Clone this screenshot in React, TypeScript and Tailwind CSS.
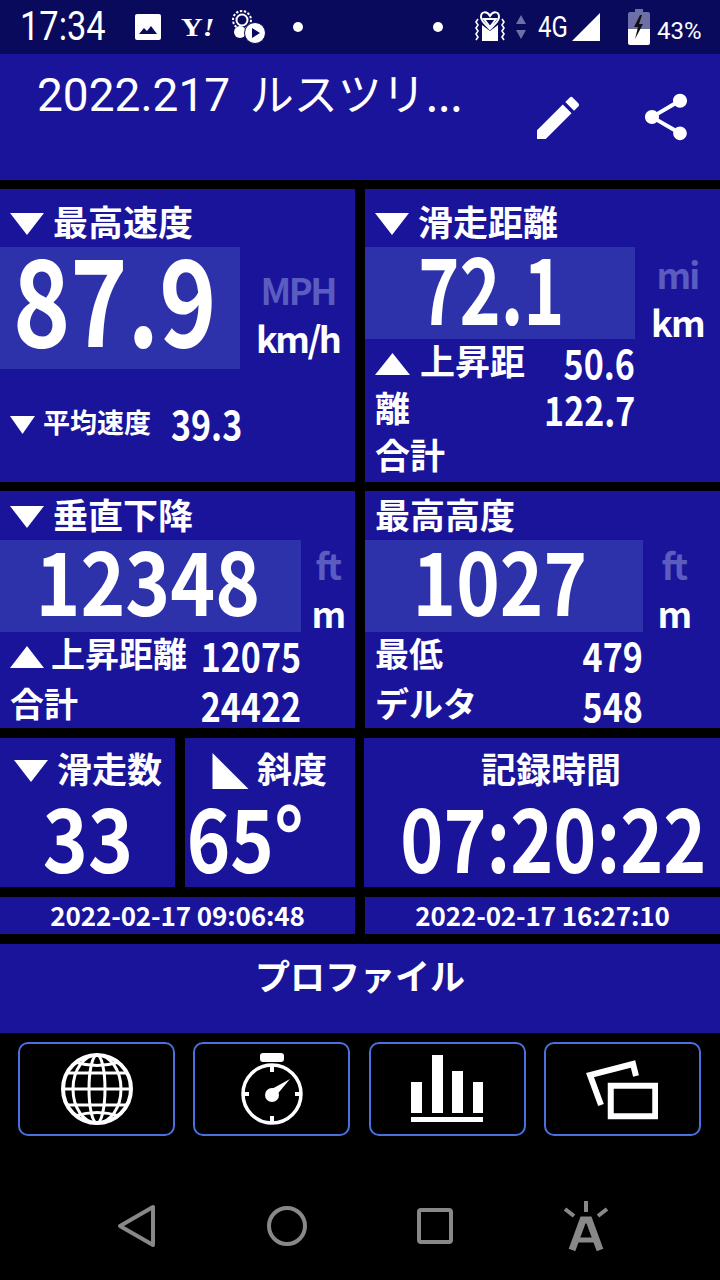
import React from "react";

function Down({ className = "w-[34px] h-[22px]" }: { className?: string }) {
  return (
    <svg viewBox="0 0 32 20" preserveAspectRatio="none" className={`${className} shrink-0 fill-white`}>
      <path d="M0 0h32L16 20z" />
    </svg>
  );
}

function Up({ className = "w-[34px] h-[22px]" }: { className?: string }) {
  return (
    <svg viewBox="0 0 32 20" preserveAspectRatio="none" className={`${className} shrink-0 fill-white`}>
      <path d="M0 20h32L16 0z" />
    </svg>
  );
}

// the digits in the picture are narrower than Noto's, so squeeze them a bit
function Num({ children, className = "" }: { children: React.ReactNode; className?: string }) {
  return <span className={`inline-block shrink-0 font-bold leading-none whitespace-nowrap ${className}`}>{children}</span>;
}

function StatusBar() {
  return (
    <div className="h-[54px] bg-[#0a0a5c] flex items-center relative text-white font-['Roboto',sans-serif]">
      <span className="ml-[20px] text-[40px] leading-none scale-x-[0.86] origin-left w-[90px] whitespace-nowrap">17:34</span>
      <svg viewBox="0 0 26 26" className="w-[26px] h-[26px] ml-[25px] fill-white">
        <path fillRule="evenodd" d="M2 0h22a2 2 0 0 1 2 2v22a2 2 0 0 1-2 2H2a2 2 0 0 1-2-2V2a2 2 0 0 1 2-2zM4 20h18l-6-8-4 5-3-3z" />
      </svg>
      <span className="ml-[20px] w-[34px] font-['Liberation_Serif',serif] font-bold text-[25px] leading-none whitespace-nowrap scale-x-[1.2] origin-left">
        Y<span className="italic">!</span>
      </span>
      <svg viewBox="0 0 34 34" className="w-[34px] h-[34px] ml-[17px] fill-white">
        <circle cx="10" cy="10" r="5.5" fill="none" stroke="#fff" strokeWidth="2" />
        <circle cx="10" cy="10" r="9" fill="none" stroke="#fff" strokeWidth="2" strokeDasharray="2.4 1.6" />
        <circle cx="8" cy="22" r="6" />
        <circle cx="23" cy="23" r="10.5" stroke="#0a0a5c" strokeWidth="1" />
        <path d="M20 18l8 5-8 5z" fill="#0a0a5c" />
      </svg>
      <span className="ml-[27px] w-[10px] h-[10px] rounded-full bg-white" />
      <span className="ml-[130px] w-[10px] h-[10px] rounded-full bg-white" />
      <svg viewBox="0 0 30 32" className="w-[30px] h-[32px] ml-[32px]" fill="none" stroke="#fff" strokeWidth="2">
        <path d="M15 5C12 0 6 0 6 6c0 4 5 8 9 12 4-4 9-8 9-12 0-6-6-6-9-1z" />
        <path d="M9 8h12l-6 8z" />
        <path d="M7 14v16h16V14l-8 6z" fill="#fff" stroke="none" />
        <path d="M3 8l-2 3 2 3-2 3 2 3-2 3 2 3-2 3M27 8l2 3-2 3 2 3-2 3 2 3-2 3 2 3" strokeWidth="1.6" />
      </svg>
      <svg viewBox="0 0 10 24" className="w-[10px] h-[24px] ml-[11px] fill-[#6f6fa8]">
        <path d="M5 0l5 9H0zM5 24L0 15h10z" />
      </svg>
      <span className="ml-[12px] text-[30px] leading-none scale-x-[0.8] origin-left w-[30px] whitespace-nowrap">4G</span>
      <svg viewBox="0 0 28 28" className="w-[28px] h-[28px] ml-[4px] fill-white">
        <path d="M28 0v28H0z" />
      </svg>
      <svg viewBox="0 0 22 36" className="w-[22px] h-[36px] ml-[28px]">
        <path d="M7 0h8v3h5a2 2 0 0 1 2 2v15H0V5a2 2 0 0 1 2-2h5z" fill="#6f6fa8" />
        <path d="M0 20h22v14a2 2 0 0 1-2 2H2a2 2 0 0 1-2-2z" fill="#fff" />
        <path d="M12 6l-6 12h4l-3 12 8-15h-4l3-9z" fill="#111" />
      </svg>
      <span className="ml-[7px] text-[24px] leading-none mt-[8px]">43%</span>
    </div>
  );
}

function AppBar() {
  return (
    <div className="h-[126px] bg-[#1a149b] flex items-start relative text-white">
      <div className="ml-[37px] mt-[11px] text-[44px] leading-[54px] w-[480px] whitespace-pre font-normal">
        <span className="font-['Roboto',sans-serif] text-[46px]">2022.217</span>  ルスツリ...
      </div>
      <svg viewBox="0 0 24 24" className="w-[56px] h-[56px] absolute left-[530px] top-[36px] fill-white">
        <path d="M3 17.25V21h3.75L17.81 9.94l-3.75-3.75L3 17.25zM20.71 7.04a1 1 0 0 0 0-1.41l-2.34-2.34a1 1 0 0 0-1.41 0l-1.83 1.83 3.75 3.75 1.83-1.83z" />
      </svg>
      <svg viewBox="0 0 24 24" className="w-[56px] h-[56px] absolute left-[638px] top-[35px] fill-white">
        <path d="M18 16.08c-.76 0-1.44.3-1.96.77L8.91 12.7c.05-.23.09-.46.09-.7s-.04-.47-.09-.7l7.05-4.11c.54.5 1.25.81 2.04.81 1.66 0 3-1.34 3-3s-1.34-3-3-3-3 1.34-3 3c0 .24.04.47.09.7L8.04 9.81C7.5 9.31 6.79 9 6 9c-1.66 0-3 1.34-3 3s1.34 3 3 3c.79 0 1.5-.31 2.04-.81l7.12 4.16c-.05.21-.08.43-.08.65 0 1.61 1.31 2.92 2.92 2.92s2.92-1.31 2.92-2.92-1.31-2.92-2.92-2.92z" />
      </svg>
    </div>
  );
}

function Label({ children, className = "" }: { children: React.ReactNode; className?: string }) {
  return <span className={`font-bold leading-none whitespace-nowrap mb-[8px] ${className}`}>{children}</span>;
}

function Units({ dim, on, className = "" }: { dim: string; on: string; className?: string }) {
  return (
    <div className={`flex flex-col items-center font-bold h-[92px] ${className}`}>
      <span className="text-[#5a5cc0] leading-none">{dim}</span>
      <span className="text-white leading-none mt-[12px]">{on}</span>
    </div>
  );
}

function StatRow({ label, value, up }: { label: string; value: string; up?: boolean }) {
  return (
    <div className="flex items-center h-[50px]">
      {up && <Up className="w-[34px] h-[22px] mr-[7px]" />}
      <Label className="text-[34px] flex-1 min-w-0">{label}</Label>
      <Num className="text-[40px] origin-right scale-x-[0.85] mb-[4px]">{value}</Num>
    </div>
  );
}

function SpeedCard() {
  return (
    <div className="bg-[#1a149b] h-[293px] w-[355px] pt-[15px]">
      <div className="flex items-center gap-[9px] pl-[10px] h-[40px]">
        <Down />
        <Label className="text-[35px]">最高速度</Label>
      </div>
      <div className="flex mt-[3px] h-[122px]">
        <div className="w-[240px] h-[122px] bg-[#2d32aa] flex items-center justify-center pr-[10px] pb-[26px]">
          <Num className="text-[120px] scale-x-[0.81]">87.9</Num>
        </div>
        <Units dim="MPH" on="km/h" className="text-[36px] ml-[16px] pt-[24px] tracking-[-0.07em]" />
      </div>
      <div className="flex items-center mt-[36px] pl-[10px] h-[40px]">
        <Down className="w-[25px] h-[18px]" />
        <Label className="text-[27px] ml-[8px]">平均速度</Label>
        <Num className="text-[40px] ml-[20px] mb-[4px] origin-left scale-x-[0.85]">39.3</Num>
      </div>
    </div>
  );
}

function DistanceCard() {
  return (
    <div className="bg-[#1a149b] h-[293px] w-[355px] pt-[15px]">
      <div className="flex items-center gap-[9px] pl-[10px] h-[40px]">
        <Down />
        <Label className="text-[35px]">滑走距離</Label>
      </div>
      <div className="flex mt-[3px]">
        <div className="w-[270px] h-[92px] bg-[#2d32aa] flex items-center justify-center pr-[18px] pb-[16px]">
          <Num className="text-[92px] scale-x-[0.76]">72.1</Num>
        </div>
        <Units dim="mi" on="km" className="text-[36px] w-[85px] pt-[8px] tracking-[-0.05em]" />
      </div>
      <div className="pl-[10px] w-[270px] mt-[1px]">
        <div className="flex items-center h-[47px]">
          <Up className="w-[35px] h-[22px] mr-[10px]" />
          <Label className="text-[35px] flex-1 min-w-0">上昇距</Label>
          <Num className="text-[40px] origin-right scale-x-[0.85] mb-[4px]">50.6</Num>
        </div>
        <div className="flex items-center h-[47px]">
          <Label className="text-[35px] flex-1 min-w-0">離</Label>
          <Num className="text-[40px] origin-right scale-x-[0.85] mb-[4px]">122.7</Num>
        </div>
        <div className="flex items-center h-[47px]">
          <Label className="text-[35px]">合計</Label>
        </div>
      </div>
    </div>
  );
}

function DescentCard() {
  return (
    <div className="bg-[#1a149b] h-[237px] w-[355px] pt-[8px]">
      <div className="flex items-center gap-[9px] pl-[10px] h-[36px]">
        <Down />
        <Label className="text-[35px]">垂直下降</Label>
      </div>
      <div className="flex mt-[5px]">
        <div className="w-[301px] h-[92px] bg-[#2d32aa] flex items-center justify-center pr-[6px] pb-[16px]">
          <Num className="text-[88px] scale-x-[0.865]">12348</Num>
        </div>
        <Units dim="ft" on="m" className="text-[36px] w-[54px] pt-[6px] tracking-[-0.05em]" />
      </div>
      <div className="pl-[10px] w-[301px]">
        <StatRow up label="上昇距離" value="12075" />
        <StatRow label="合計" value="24422" />
      </div>
    </div>
  );
}

function AltitudeCard() {
  return (
    <div className="bg-[#1a149b] h-[237px] w-[355px] pt-[8px]">
      <div className="flex items-center pl-[10px] h-[36px]">
        <Label className="text-[35px]">最高高度</Label>
      </div>
      <div className="flex mt-[5px]">
        <div className="w-[278px] h-[92px] bg-[#2d32aa] flex items-center justify-center pr-[8px] pb-[16px]">
          <Num className="text-[88px] scale-x-[0.84]">1027</Num>
        </div>
        <Units dim="ft" on="m" className="text-[36px] w-[62px] pt-[6px] tracking-[-0.05em]" />
      </div>
      <div className="pl-[10px] w-[278px]">
        <StatRow label="最低" value="479" />
        <StatRow label="デルタ" value="548" />
      </div>
    </div>
  );
}

function CountRow() {
  return (
    <div className="flex h-[149px]">
      <div className="bg-[#1a149b] w-[175px] pt-[13px] flex flex-col items-center">
        <div className="flex items-center self-start pl-[14px] gap-[9px] h-[40px]">
          <Down />
          <Label className="text-[35px]">滑走数</Label>
        </div>
        <Num className="text-[88px] scale-x-[0.87]">33</Num>
      </div>
      <div className="bg-[#1a149b] w-[170px] ml-[10px] pt-[13px] flex flex-col">
        <div className="flex items-center pl-[27px] h-[40px]">
          <svg viewBox="0 0 36 36" className="w-[37px] h-[36px] shrink-0 fill-white">
            <path d="M0 0v36h36z" />
          </svg>
          <Label className="text-[35px] ml-[8px]">斜度</Label>
        </div>
        <Num className="pl-[2px] text-[88px] origin-left scale-x-[0.84]">65°</Num>
      </div>
      <div className="bg-[#1a149b] w-[356px] ml-[9px] pt-[13px] flex flex-col items-center">
        <div className="h-[40px] flex items-center ml-[18px]">
          <Label className="text-[35px]">記録時間</Label>
        </div>
        <Num className="text-[88px] ml-[22px] scale-x-[0.83]">07:20:22</Num>
      </div>
    </div>
  );
}

function Buttons() {
  const btn = "h-[94px] w-[157px] rounded-[10px] border-2 border-[#4a70dc] flex items-center justify-center bg-black";
  return (
    <div className="flex justify-between pl-[18px] pr-[19px] mt-[9px]">
      <div className={btn}>
        <svg viewBox="0 0 72 72" className="w-[72px] h-[72px]" fill="none" stroke="#fff" strokeWidth="3">
          <circle cx="36" cy="36" r="34" strokeWidth="4" />
          <ellipse cx="36" cy="36" rx="24" ry="34" />
          <ellipse cx="36" cy="36" rx="8" ry="34" />
          <path d="M2 36h68M6 20h60M6 52h60" />
          <path d="M14 9q22 7 44 0M14 63q22-7 44 0" />
        </svg>
      </div>
      <div className={btn}>
        <svg viewBox="0 0 64 72" className="w-[64px] h-[72px]" fill="none" stroke="#fff">
          <rect x="20" y="0" width="24" height="9" rx="3" fill="#fff" stroke="none" />
          <circle cx="32" cy="41" r="29" strokeWidth="3.5" />
          <path d="M32 12v7M32 63v7M3 41h6M55 41h6" strokeWidth="4" />
          <circle cx="32" cy="42" r="7" fill="#fff" stroke="none" />
          <path d="M30 37l20-11-15 18z" fill="#fff" stroke="none" />
        </svg>
      </div>
      <div className={btn}>
        <svg viewBox="0 0 72 68" className="w-[72px] h-[68px] fill-white">
          <rect x="0" y="27" width="11" height="31" />
          <rect x="21" y="0" width="11" height="58" />
          <rect x="41" y="16" width="11" height="42" />
          <rect x="62" y="27" width="10" height="31" />
          <rect x="0" y="62" width="72" height="5" />
        </svg>
      </div>
      <div className={btn}>
        <svg viewBox="0 0 72 62" className="w-[72px] h-[62px]" fill="none" stroke="#fff" strokeWidth="6">
          <path d="M15 47L4 17l43-11 3 12" />
          <rect x="24.75" y="27.75" width="44.5" height="30.5" />
        </svg>
      </div>
    </div>
  );
}

function NavBar() {
  return (
    <div className="flex-1 flex items-center pt-[36px] pl-[117px]">
      <svg viewBox="0 0 40 44" className="w-[40px] h-[44px]" fill="none" stroke="#888" strokeWidth="4" strokeLinejoin="round">
        <path d="M36 3v38L3 22z" />
      </svg>
      <svg viewBox="0 0 40 40" className="w-[40px] h-[40px] ml-[110px]" fill="none" stroke="#888" strokeWidth="4">
        <circle cx="20" cy="20" r="18" />
      </svg>
      <svg viewBox="0 0 36 36" className="w-[36px] h-[36px] ml-[110px]" fill="none" stroke="#888" strokeWidth="4" strokeLinejoin="round">
        <rect x="2" y="2" width="32" height="32" rx="2" />
      </svg>
      <svg viewBox="0 0 46 50" className="w-[46px] h-[50px] ml-[110px]" fill="none" stroke="#888" strokeWidth="4">
        <path d="M23 0v11M2 8l9 7M44 8l-9 7" />
        <path d="M9 49l11-30h6l11 30" strokeWidth="7" />
        <path d="M14 39h18" strokeWidth="5" />
      </svg>
    </div>
  );
}

export default function App() {
  return (
    <div className="w-[720px] h-[1280px] bg-black text-white flex flex-col overflow-hidden font-['Noto_Sans_CJK_JP','Noto_Sans',sans-serif]">
      <StatusBar />
      <AppBar />
      <div className="flex justify-between mt-[9px]">
        <SpeedCard />
        <DistanceCard />
      </div>
      <div className="flex justify-between mt-[9px]">
        <DescentCard />
        <AltitudeCard />
      </div>
      <div className="mt-[10px]">
        <CountRow />
      </div>
      <div className="flex mt-[10px] h-[37px]">
        <div className="bg-[#1a149b] w-[355px] flex items-center justify-center pb-[3px] text-[26px] font-bold tracking-[-0.005em]">2022-02-17 09:06:48</div>
        <div className="bg-[#1a149b] w-[355px] ml-[10px] flex items-center justify-center pb-[3px] text-[26px] font-bold tracking-[-0.005em]">2022-02-17 16:27:10</div>
      </div>
      <div className="bg-[#1a149b] h-[89px] mt-[10px] pt-[8px] text-center text-[35px] font-bold leading-[46px]">プロファイル</div>
      <Buttons />
      <NavBar />
    </div>
  );
}
